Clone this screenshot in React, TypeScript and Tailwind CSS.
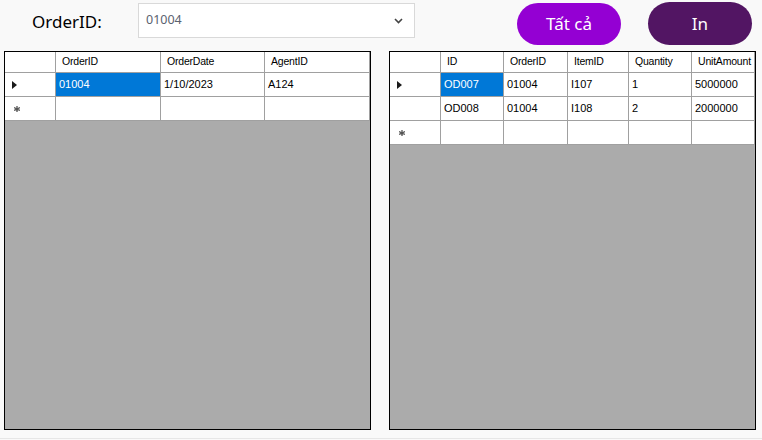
import React from 'react'

type Col = { title: string; width: string }

const orderCols: Col[] = [
  { title: 'OrderID', width: 'w-[105px]' },
  { title: 'OrderDate', width: 'w-[104px]' },
  { title: 'AgentID', width: 'w-[105px]' },
]

const detailCols: Col[] = [
  { title: 'ID', width: 'w-[63px]' },
  { title: 'OrderID', width: 'w-[64px]' },
  { title: 'ItemID', width: 'w-[61px]' },
  { title: 'Quantity', width: 'w-[63px]' },
  { title: 'UnitAmount', width: 'w-[63px]' },
]

const orders = [['01004', '1/10/2023', 'A124']]

const details = [
  ['OD007', '01004', 'I107', '1', '5000000'],
  ['OD008', '01004', 'I108', '2', '2000000'],
]

function RowMarker({ kind }: { kind: 'current' | 'new' | 'none' }) {
  if (kind === 'current') {
    return (
      <svg width="5" height="8" viewBox="0 0 5 8" className="ml-[7px]">
        <path d="M0 0 L5 4 L0 8 Z" fill="#1a1a1a" />
      </svg>
    )
  }
  if (kind === 'new') {
    return (
      <svg width="6" height="6" viewBox="0 0 6 6" className="ml-[9px]">
        <path d="M3 0 V6 M0 1.5 L6 4.5 M0 4.5 L6 1.5" stroke="#555" strokeWidth="1.3" />
      </svg>
    )
  }
  return null
}

/**
 * Simple DataGridView-style table: header row, data rows, a "new row" line
 * and grey workspace below.
 */
function Grid({ cols, rows }: { cols: Col[]; rows: string[][] }) {
  const cell = 'h-full flex items-center border-r border-b border-[#a0a0a0] overflow-hidden whitespace-nowrap'
  return (
    <div className="w-[367px] h-[379px] border border-black flex flex-col bg-[#ababab] font-['Liberation_Sans',Arial,sans-serif] text-[11px] text-black">
      <div className="flex h-[21px] bg-white">
        <div className={`${cell} w-[51px]`} />
        {cols.map((c) => (
          <div key={c.title} className={`${cell} ${c.width} pl-[6px] text-[10.5px] tracking-[-0.2px]`}>
            {c.title}
          </div>
        ))}
      </div>
      {rows.map((r, i) => (
        <div key={i} className="flex h-[24px] bg-white">
          <div className={`${cell} w-[51px]`}>
            <RowMarker kind={i === 0 ? 'current' : 'none'} />
          </div>
          {r.map((v, j) => (
            <div
              key={j}
              className={`${cell} ${cols[j].width} pl-[3px] ${
                i === 0 && j === 0 ? 'bg-[#0078d7] text-white' : ''
              }`}
            >
              {v}
            </div>
          ))}
        </div>
      ))}
      <div className="flex h-[24px] bg-white">
        <div className={`${cell} w-[51px]`}>
          <RowMarker kind="new" />
        </div>
        {cols.map((c) => (
          <div key={c.title} className={`${cell} ${c.width}`} />
        ))}
      </div>
    </div>
  )
}

export default function App() {
  return (
    <div className="w-[762px] h-[440px] bg-[#f9f9f9] flex flex-col font-['Noto_Sans',sans-serif]">
      <div className="h-[51px] flex items-start">
        <div className="ml-[32px] w-[106px] mt-[10px] text-[17px] leading-[24px] text-black">OrderID:</div>
        <div className="mt-[3px] w-[277px] h-[35px] bg-white border border-[#d9d9d9] flex items-center justify-between pl-[7px] pr-[11px]">
          <span className="text-[12.5px] text-[#5b6270]">01004</span>
          <svg width="9" height="6" viewBox="0 0 9 6">
            <path d="M1 1 L4.5 4.5 L8 1" fill="none" stroke="#444" strokeWidth="1.6" />
          </svg>
        </div>
        <button className="ml-[102px] mt-[3px] w-[104px] h-[42px] rounded-full bg-[#9400d3] text-white text-[17px]">
          Tất cả
        </button>
        <button className="ml-[27px] mt-[2px] w-[104px] h-[43px] rounded-full bg-[#521563] text-white text-[17px]">
          In
        </button>
      </div>
      <div className="flex gap-[18px] pl-[4px]">
        <Grid cols={orderCols} rows={orders} />
        <Grid cols={detailCols} rows={details} />
      </div>
      <div className="mt-[8px] border-b border-[#e6e6e6]" />
    </div>
  )
}
